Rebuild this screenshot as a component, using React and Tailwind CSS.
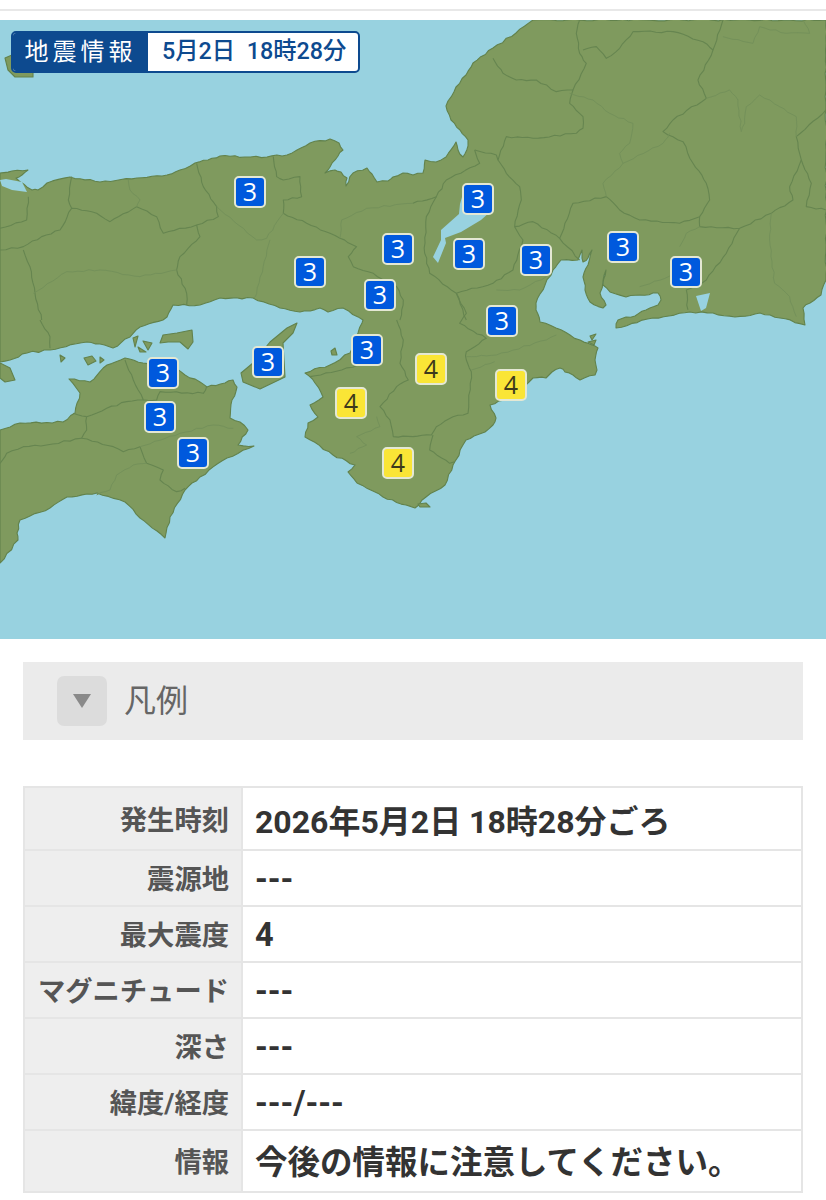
const honshu = "0,173 12,171 28,170 22,175 16,178 32,190 38,190 47,183 70,177 100,182 137,178 167,175 180,170 195,163 208,160 220,156 245,157 267,157 287,155 297,150 310,143 330,139 339,143 343,150 338,156 330,167 325,173 335,170 341,172 347,178 346,186 353,173 367,168 372,174 377,182 388,181 393,177 403,173 413,175 423,173 425,160 436,162 446,157 456,142 458,150 463,157 468,146 468,140 460,130 451,120 446,106 456,87 466,75 473,63 493,48 516,33 533,20 826,20 826,280 821,295 810,303 803,308 805,325 780,318 760,313 735,317 713,313 690,312 653,318 616,328 618,320 626,317 635,316 646,310 658,305 661,300 658,293 640,295 626,297 610,292 603,285 606,270 600,293 606,305 603,308 590,302 585,290 583,277 588,265 592,250 588,258 583,262 582,250 578,260 561,260 553,270 545,285 536,303 536,310 540,322 556,328 570,335 580,340 592,345 598,348 595,360 597,370 595,375 580,380 573,375 565,372 560,368 552,372 546,378 533,378 528,383 513,397 490,405 496,418 493,425 485,432 474,436 466,440 453,465 445,485 426,497 415,508 406,505 383,497 357,483 348,472 355,465 333,455 305,437 308,423 318,417 310,405 323,397 315,383 305,373 330,365 350,353 358,333 362,323 363,320 343,308 328,312 320,308 300,312 280,308 253,298 220,298 200,305 173,305 167,317 163,320 140,327 130,337 113,348 100,344 87,342 50,350 27,353 10,360 0,362";
const shikoku = "0,430 20,423 63,422 75,413 80,393 69,379 90,382 107,365 125,358 143,363 167,363 185,375 200,382 207,387 225,383 233,380 237,387 232,400 230,418 240,422 248,430 238,445 254,446 227,458 200,477 185,490 170,517 165,538 140,518 125,502 97,493 67,497 50,508 20,520 17,533 18,540 0,563";
const awaji = "297,323 293,333 283,343 285,377 260,389 243,382 241,373 253,363 270,342 287,328";
const shodo = "160,343 163,335 177,333 192,330 193,342 188,349 180,342 168,342";
const islands = ["5,58 12,55 33,68 33,77 15,77 8,70","0,363 10,368 15,380 5,382 0,378","133,338 138,336 135,347","143,341 152,343 148,350","138,347 146,352 140,352","84,358 92,356 96,361 88,365","60,355 65,358 61,362","100,357 104,360 100,363","331,351 335,348 337,355 332,355","590,336 596,334 592,340","588,342 596,340 594,345","418,504 426,503 430,507 420,507"];
const biwa = "459,214 441,230 441,240 433,257 438,263 446,243 445,238 461,232 481,220 490,212 490,192 478,184 464,190 460,204";
const lakes = ["696,296 710,293 706,308 701,311","6,179 22,182 27,192 12,190 2,186 0,180"];
const thick = {
  a: ["590,490 610,560 650,620 655,650 590,675 490,700 470,650 410,620 330,665 290,640 215,625 180,690 125,710 70,740 0,750","820,470 830,530 850,540 900,530 905,590 850,600 850,640 920,670 990,700 1020,715 1070,740 1045,770 1060,800 1120,820 1190,860 1210,900 1200,960","590,675 600,710 540,770 530,810 560,880 560,915","215,530 205,600 215,625","70,750 90,800 105,880 125,960","0,685 80,660 85,590"],
  b: ["240,175 270,220 310,240 370,240 430,275 480,270 520,190 500,160 490,100 500,60","480,270 470,310 510,350 510,385 490,400 360,415 280,410 255,480 280,520 320,560 325,600 305,680 360,665 440,715 500,780","185,450 250,465 255,480","185,450 200,490 100,540 70,590 0,610","70,590 40,650 35,760 50,820 130,880 160,960","305,680 330,720 300,810 240,850 130,880","440,715 480,610 580,590 620,630 680,660 800,670 860,650 890,600 880,550 840,490 810,425 750,395 780,360 880,295 855,240 900,150 870,125 780,95 660,95 620,145 580,175 550,140 510,150","900,150 930,60","860,650 860,680 980,685 1075,640 1140,600 1130,560 1165,480 1150,410 1239,330","980,685 940,760 880,840 820,870 825,930","1165,480 1195,550 1180,620 1239,630"],
  c: ["120,0 150,50 150,85","1239,350 1180,350 1170,300 1140,260 1190,200 1225,180 1200,130 1210,60 1190,0","930,170 1025,150 1140,115","375,120 400,180 430,240 380,245 320,265 260,290 260,330 245,355 340,380 370,395 420,380 440,430 490,450 480,480 530,515 555,505","220,280 260,290","0,430 20,400 70,380 140,375 245,355","430,240 470,240 480,215 610,220 620,200"],
  d: ["130,40 160,100 140,130 220,175 160,215 160,240 175,275 165,400 120,410 70,440 55,465 0,470","60,465 50,510 110,550 125,545"],
};
const thin = {
  a: ["385,540 390,570 420,600 410,620","650,620 770,720 800,715 850,640","810,720 770,880 760,895","100,880 200,815 300,810 420,830 530,810","1020,715 1025,660 1100,625 1239,610"],
  b: ["470,280 540,300 590,340 660,370 650,430 620,460 630,490 570,550 580,590","630,490 750,430 770,400","880,295 950,270 975,300 985,395 995,370 1000,320 1040,285 1100,320 1150,350 1150,410","930,110 1020,130 1040,80 1120,100 1190,100 1170,60","1075,640 1070,720 1085,850 1130,890 1150,950","800,740 820,700 860,680","680,860 800,820","250,870 320,870 400,830"],
  c: ["420,380 540,340 640,315 700,325","440,430 400,435 350,465 330,510 290,525","1130,290 1140,320 1070,350 1100,375 1050,400"],
  d: ["160,230 250,225 400,180 430,165","175,270 245,245"],
};
const offset = { a: "translate(0,0) scale(0.3333)", b: "translate(413,0) scale(0.3333)", c: "translate(0,320) scale(0.3333)", d: "translate(413,280) scale(0.3333)" };

// Adds small deterministic wiggle so hand-traced outlines read like real coast and borders.
function wiggle(str, amp) {
  const pts = str.split(" ").map((s) => s.split(",").map(Number));
  const out = [];
  let seed = 7;
  const rnd = () => {
    seed = (seed * 16807) % 2147483647;
    return (seed % 1000) / 500 - 1;
  };
  for (let i = 0; i < pts.length - 1; i++) {
    const [x1, y1] = pts[i];
    const [x2, y2] = pts[i + 1];
    out.push(`${x1},${y1}`);
    const len = Math.hypot(x2 - x1, y2 - y1);
    const steps = Math.floor(len / (amp * 6));
    for (let s = 1; s <= steps; s++) {
      const t = s / (steps + 1);
      const d = rnd() * amp;
      const nx = len ? -(y2 - y1) / len : 0;
      const ny = len ? (x2 - x1) / len : 0;
      out.push(`${(x1 + (x2 - x1) * t + nx * d).toFixed(1)},${(y1 + (y2 - y1) * t + ny * d).toFixed(1)}`);
    }
  }
  out.push(pts[pts.length - 1].join(","));
  return out.join(" ");
}

const pins = [
  [3,250,192],[3,478,199],[3,398,249],[3,469,254],[3,536,260],[3,623,247],[3,686,272],[3,310,272],[3,380,295],[3,502,321],[3,367,350],[3,268,362],[3,163,373],[3,160,417],[3,193,453],
  [4,431,369],[4,511,385],[4,351,403],[4,398,463],
];
const rows = [
  ["発生時刻","2026年5月2日 18時28分ごろ","h-[63px]","text-[32px] font-bold pt-[6px]"],
  ["震源地","---","h-[56px]","text-[32.5px] font-bold pt-[3px]"],
  ["最大震度","4","h-[56px]","text-[32.5px] font-bold pt-[3px]"],
  ["マグニチュード","---","h-[56px]","text-[32.5px] font-bold pt-[3px]"],
  ["深さ","---","h-[56px]","text-[32.5px] font-bold pt-[3px]"],
  ["緯度/経度","---/---","h-[56px]","text-[32.5px] font-bold pt-[3px]"],
  ["情報","今後の情報に注意してください。","h-[62px]","text-[32.5px] font-semibold pt-[4px]"],
];
function MapArt() {
  return (
    <svg viewBox="0 20 826 619" className="block w-[826px] h-[619px]">
      <g fill="#7f9a5e" stroke="#62824c" strokeWidth="1.1" strokeLinejoin="round">
        <polygon points={wiggle(honshu, 1)} />
        <polygon points={wiggle(shikoku, 1)} />
        <polygon points={awaji} />
        <polygon points={shodo} />
        {islands.map((p) => <polygon key={p} points={p} />)}
      </g>
      <g fill="#98d2e0">
        <polygon points={biwa} />
        {lakes.map((p) => <polygon key={p} points={p} />)}
      </g>
      {Object.keys(thick).map((k) => (
        <g key={k} transform={offset[k]} fill="none" strokeLinejoin="round">
          {thick[k].map((p) => <polyline key={p} points={wiggle(p, 3)} stroke="#668550" strokeWidth="1.1" vectorEffect="non-scaling-stroke" />)}
          {thin[k].map((p) => <polyline key={p} points={wiggle(p, 3)} stroke="#74915a" strokeWidth="1" vectorEffect="non-scaling-stroke" />)}
        </g>
      ))}
    </svg>
  );
}
export default function App() {
  return (
    <div className="w-[826px] h-[1200px] bg-white overflow-hidden font-['Roboto','Noto_Sans_CJK_JP',sans-serif]">
      <div className="h-[20px] pt-[9px]"><div className="h-[2px] bg-[#e8e8e8]" /></div>
      <div className="relative h-[619px] bg-[#98d2e0] overflow-hidden">
        <MapArt />
        {pins.map(([n, x, y]) => (
          <div
            key={`${x}-${y}`}
            style={{ left: x - 16, top: y - 36 }}
            className={`absolute w-[32px] h-[32px] rounded-[5px] border-[2.5px] border-[#e4e8d4] flex items-center justify-center text-[25px] font-['Open_Sans',sans-serif] ${n === 3 ? "bg-[#0059dd] text-white" : "bg-[#fae536] text-[#3d3a1c]"}`}
          >
            {n}
          </div>
        ))}
        <div className="absolute left-[11px] top-[11px] w-[349px] h-[42px] flex rounded-[5px] border-2 border-[#0d4a8f] bg-white overflow-hidden">
          <div className="w-[135px] bg-[#0d4a8f] text-white text-[24px] tracking-[4px] flex items-center justify-center leading-none">地震情報</div>
          <div className="flex-1 text-[#0d4a8f] text-[23.3px] font-medium flex items-center pl-[14px] leading-none whitespace-pre">5月2日  18時28分</div>
        </div>
      </div>
      <div className="mx-[23px] mt-[23px] h-[78px] bg-[#ebebeb] flex items-center pl-[34px]">
        <div className="w-[50px] h-[50px] rounded-[7px] bg-[#dcdcdc] flex items-center justify-center">
          <svg width="18" height="14" viewBox="0 0 18 14"><polygon points="0,0 18,0 9,14" fill="#8a8a8a" /></svg>
        </div>
        <span className="ml-[17px] text-[32px] text-[#666666] leading-none">凡例</span>
      </div>
      <div className="mx-[23px] mt-[46px] border-2 border-b-0 border-[#e5e5e5]">
        {rows.map(([k, v, h, cls]) => (
          <div key={k} className={`flex border-b-2 border-[#e5e5e5] ${h}`}>
            <div className="w-[218px] shrink-0 bg-[#eeeeee] border-r-2 border-[#e5e5e5] flex items-center justify-end pr-[12px] pt-[5px] text-[27.3px] font-bold text-[#555555] whitespace-nowrap">{k}</div>
            <div className={`flex-1 flex items-center pl-[12px] text-[#333333] whitespace-nowrap ${cls}`}>{v}</div>
          </div>
        ))}
      </div>
    </div>
  );
}
